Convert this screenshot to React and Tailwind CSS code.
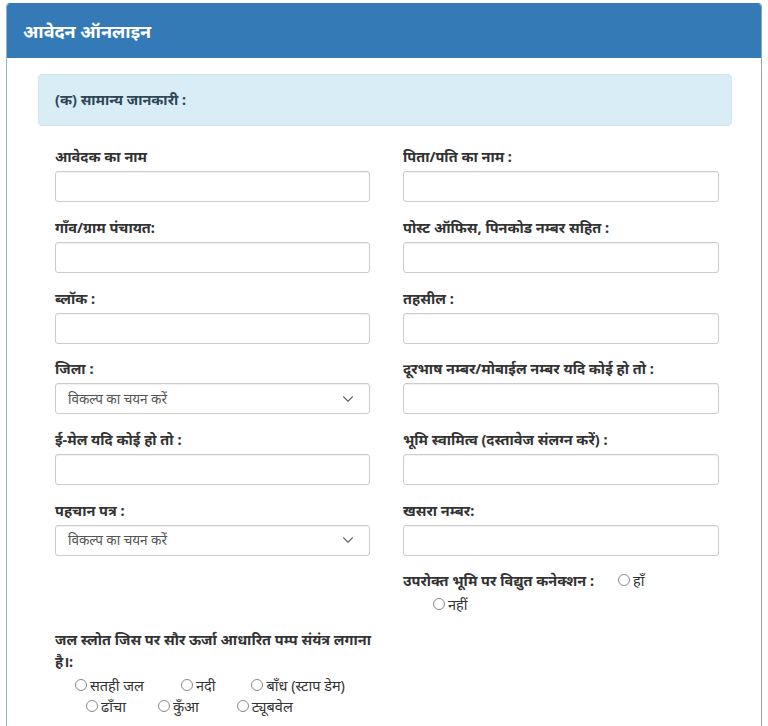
import { ChevronDown } from 'lucide-react';

const font = { fontFamily: '"Noto Sans", "Liberation Sans", sans-serif' };

function Field({ label, select }) {
  return (
    <div className="mb-[14.8px]">
      <div className="text-[14.5px] leading-[20px] font-bold text-[#333] mb-[5px] whitespace-nowrap">{label}</div>
      {select ? (
        <div className="h-[31px] border border-[#ccc] rounded-[3px] flex items-center justify-between pl-[12px] pr-[12px] shadow-[inset_0_1px_1px_rgba(0,0,0,0.06)]">
          <span className="text-[13.5px] text-[#555]">विकल्प का चयन करें</span>
          <ChevronDown size={18} strokeWidth={1.5} className="text-[#666]" />
        </div>
      ) : (
        <div className="h-[31px] border border-[#ccc] rounded-[3px] shadow-[inset_0_1px_1px_rgba(0,0,0,0.06)]" />
      )}
    </div>
  );
}

function Radio({ label, className = '' }) {
  return (
    <span className={`inline-flex items-center text-[14.5px] text-[#333] ${className}`}>
      <span className="w-[12px] h-[12px] rounded-full border border-[#888] mr-[3px] bg-white" />
      {label}
    </span>
  );
}

export default function App() {
  const rows = [
    ['आवेदक का नाम', 'पिता/पति का नाम :'],
    ['गाँव/ग्राम पंचायत:', 'पोस्ट ऑफिस, पिनकोड नम्बर सहित :'],
    ['ब्लॉक :', 'तहसील :'],
    ['जिला :', 'दूरभाष नम्बर/मोबाईल नम्बर यदि कोई हो तो :', true],
    ['ई-मेल यदि कोई हो तो :', 'भूमि स्वामित्व (दस्तावेज संलग्न करें) :'],
    ['पहचान पत्र :', 'खसरा नम्बर:', true],
  ];

  return (
    <div className="w-[768px] h-[726px] bg-white overflow-hidden pt-[3px]" style={font}>
      <div className="mx-[6px] border border-[#337ab7] border-r-[#9aa5a0] border-l-[#8fb3d2] rounded-t-[4px] h-[740px]">
        <div className="h-[54px] bg-[#337ab7] flex items-center px-[16px] rounded-t-[3px]">
          <h2 className="text-[18px] font-bold text-white">आवेदन ऑनलाइन</h2>
        </div>

        <div className="pl-[31px] pr-[29px] pt-[16px]">
          <div className="h-[52px] bg-[#d9edf7] border border-[#cfe6f1] rounded-[4px] flex items-center px-[16px]">
            <span className="text-[14.5px] font-bold text-[#2f4656]">(क) सामान्य जानकारी :</span>
          </div>

          <div className="grid grid-cols-[315px_316px] gap-x-[33px] pl-[17px] mt-[20px]">
            {rows.map(([l, r, sel]) => (
              <>
                <Field key={l} label={l} select={sel} />
                <Field key={r} label={r} />
              </>
            ))}

            <div />
            <div className="-mt-[2px]">
              <div className="flex items-center leading-[22px]">
                <span className="text-[14.5px] font-bold text-[#333]">उपरोक्त भूमि पर विद्युत कनेक्शन :</span>
                <Radio label="हाँ" className="ml-[24px]" />
              </div>
              <div className="leading-[22px] mt-[2px]">
                <Radio label="नहीं" className="ml-[30px]" />
              </div>
            </div>

            <div className="mt-[13px] -mr-[8px]">
              <div className="text-[14.5px] leading-[22px] font-bold text-[#333]">
                जल स्लोत जिस पर सौर ऊर्जा आधारित पम्प संयंत्र लगाना है।:
              </div>
              <div className="flex items-center mt-[3px] leading-[20px]">
                <Radio label="सतही जल" className="ml-[20px]" />
                <Radio label="नदी" className="ml-[37px]" />
                <Radio label="बाँध (स्टाप डेम)" className="ml-[36px]" />
              </div>
              <div className="flex items-center mt-[1px] leading-[20px]">
                <Radio label="ढाँचा" className="ml-[31px]" />
                <Radio label="कुँआ" className="ml-[32px]" />
                <Radio label="ट्यूबवेल" className="ml-[38px]" />
              </div>
            </div>
            <div />
          </div>
        </div>
      </div>
    </div>
  );
}
